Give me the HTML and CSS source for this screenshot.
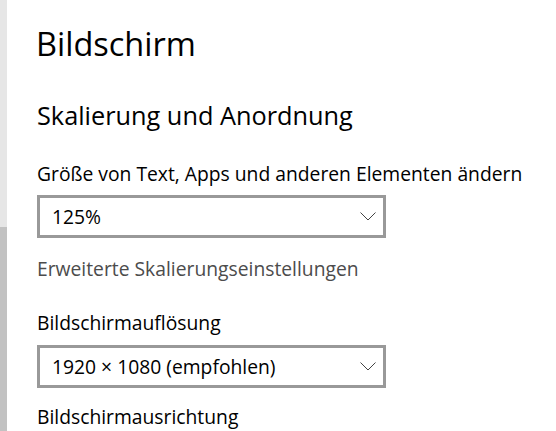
FILE: index.html
```html
<!DOCTYPE html>
<html>
<head>
  <title>Bildschirm</title>
  <link rel="stylesheet" href="styles.css">
</head>
<body>
  <div class="window">
    <div class="scrollbar">
      <div class="scroll-thumb"></div>
    </div>

    <div class="settings">
      <h1>Bildschirm</h1>

      <h2>Skalierung und Anordnung</h2>

      <div class="label">Größe von Text, Apps und anderen Elementen ändern</div>
      <div class="combo">
        <span>125%</span>
        <svg class="chevron" width="16" height="9" viewBox="0 0 16 9">
          <path d="M0.5 0.5 L8 8 L15.5 0.5" fill="none" stroke="#444" stroke-width="1"/>
        </svg>
      </div>

      <a class="link" href="#">Erweiterte Skalierungseinstellungen</a>

      <div class="label label-res">Bildschirmauflösung</div>
      <div class="combo">
        <span>1920 × 1080 (empfohlen)</span>
        <svg class="chevron" width="16" height="9" viewBox="0 0 16 9">
          <path d="M0.5 0.5 L8 8 L15.5 0.5" fill="none" stroke="#444" stroke-width="1"/>
        </svg>
      </div>

      <div class="label label-orient">Bildschirmausrichtung</div>
    </div>
  </div>
</body>
</html>
```

FILE: styles.css
```css
/* Settings page */
body {
  margin: 0;
  background-color: #fff;
  font-family: "Open Sans", "Noto Sans", sans-serif;
  color: #000;
  overflow: hidden;
}

.window {
  display: flex;
  height: 431px;
}

/* Left pane scrollbar */
.scrollbar {
  width: 7px;
  background-color: #e6e6e6;
  display: flex;
  flex-direction: column;
}

.scroll-thumb {
  margin-top: 227px;
  flex: 1;
  background-color: #c2c2c2;
}

.settings {
  padding-left: 29px;
  display: flex;
  flex-direction: column;
  align-items: flex-start;
}

.settings h1 {
  margin: 20px 0 0 0;
  font-size: 32.5px;
  font-weight: 400;
  line-height: 48px;
}

.settings h2 {
  margin: 30px 0 0 1px;
  font-size: 25.3px;
  font-weight: 400;
  line-height: 34px;
}

.label {
  margin: 29px 0 0 1px;
  font-size: 19.3px;
  line-height: 26px;
}

.label-res {
  margin-top: 28px;
}

.label-orient {
  margin-top: 16px;
}

.combo {
  margin: 8px 0 0 1px;
  width: 349px;
  height: 43px;
  border: 3px solid #999;
  box-sizing: border-box;
  display: flex;
  align-items: center;
  justify-content: space-between;
  padding: 0 7px 0 12px;
  font-size: 19.3px;
}

.label-res + .combo {
  margin-top: 9px;
}

.combo .chevron {
  display: block;
}

.link {
  margin: 18px 0 0 1px;
  font-size: 19.3px;
  line-height: 26px;
  color: #4c4c4c;
  text-decoration: none;
}
```
